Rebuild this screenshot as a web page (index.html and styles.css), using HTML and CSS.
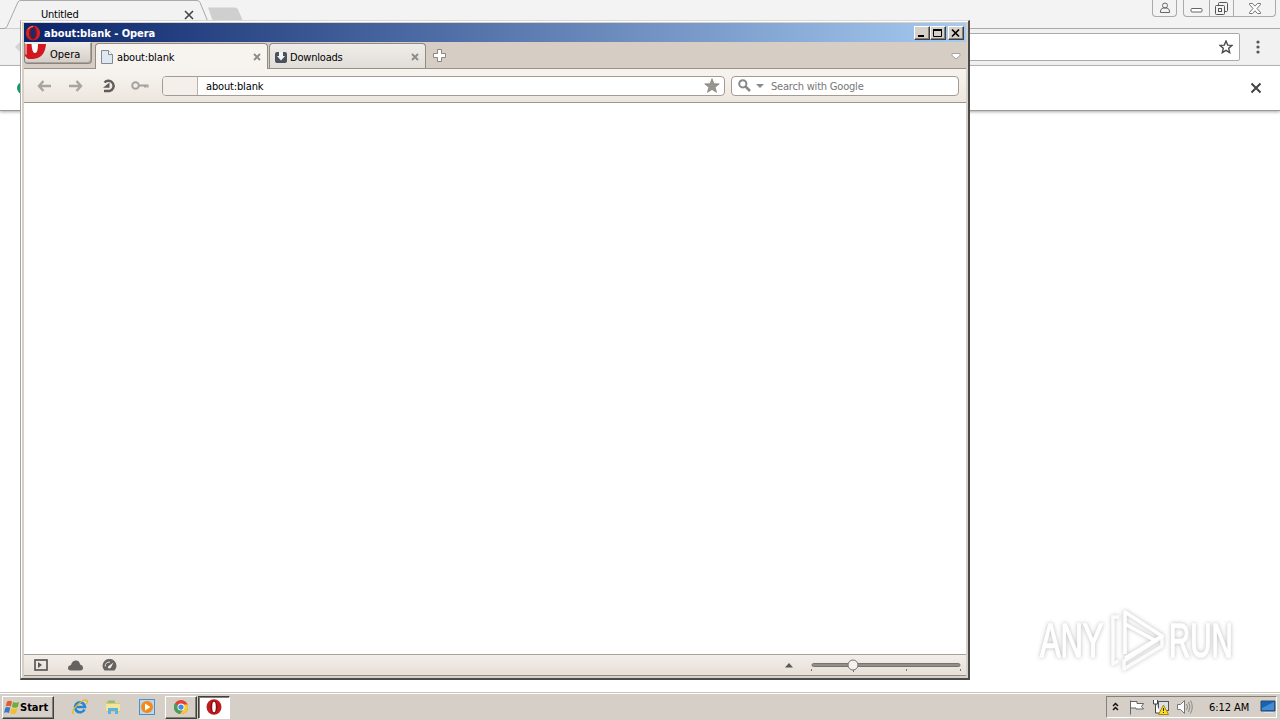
FILE: index.html
```html
<!DOCTYPE html>
<html lang="en">
<head>
<meta charset="utf-8">
<title>Desktop</title>
<link rel="stylesheet" href="styles.css">
</head>
<body>
<div class="desktop">
  <section class="chrome">
    <header class="chrome-tabs">
      <svg class="chrome-tab-shape" width="250" height="29" viewBox="0 0 250 29"><path d="M208 7.500h27q2 0 3 2l6 14h-28q-2 0-3-2z" fill="#cfcfcf"/><path d="M0 28.500h4q2 0 3-2L18 2q1-1.500 3-1.500h176q2 0 3 2l10 24q1 2 3 2" fill="#f2f2f2" stroke="#a9a9a9"/></svg>
      <span class="chrome-tab-title">Untitled</span>
      <svg class="chrome-tab-close" width="10" height="10" viewBox="0 0 10 10"><path d="M1 1l8 8M9 1L1 9" stroke="#444" stroke-width="1.600"/></svg>
      <div class="chrome-controls">
        <span class="ctl user"><svg width="12" height="12" viewBox="0 0 12 12" fill="none" stroke="#666"><circle cx="6" cy="3.500" r="2.500"/><path d="M1.500 10.500V9q0-2 2.500-3h4q2.500 1 2.500 3v1.500z"/></svg></span>
        <span class="ctl-group">
          <span class="ctl min"><svg width="13" height="14" viewBox="0 0 13 14"><rect x="1" y="8.500" width="11" height="3.500" rx="1" fill="#fff" stroke="#666"/></svg></span>
          <span class="ctl mid"><svg width="13" height="13" viewBox="0 0 13 13" fill="#f3f3f3" stroke="#555"><rect x="3.500" y=".5" width="9" height="9" rx="1"/><rect x=".5" y="3.500" width="9" height="9" rx="1"/><rect x="3.500" y="6.500" width="3" height="3"/></svg></span>
          <span class="ctl last"><svg width="12" height="11" viewBox="0 0 12 11"><path d="M.5.500h3L6 3.200 8.500.500h3v1L8 5.500l3.500 4v1h-3L6 7.800l-2.500 2.700h-3v-1L4 5.500.5 1.500z" fill="#fff" stroke="#666" stroke-width=".9"/></svg></span>
        </span>
      </div>
    </header>
    <div class="chrome-toolbar">
      <svg class="chrome-back" width="8" height="12" viewBox="0 0 8 12"><path d="M0 6l6-6v12z" fill="#d4d4d4"/></svg>
      <div class="chrome-address"><svg width="14" height="14" viewBox="0 0 14 14"><path d="M7 1l1.700 4.100 4.300.3-3.300 2.900 1 4.300L7 10.300l-3.700 2.300 1-4.300L1 5.400l4.300-.3z" fill="#fff" stroke="#4b4b4b" stroke-width="1.400"/></svg></div>
      <svg class="chrome-menu" width="4" height="14" viewBox="0 0 4 14" fill="#555"><circle cx="2" cy="2" r="1.600"/><circle cx="2" cy="7" r="1.600"/><circle cx="2" cy="12" r="1.600"/></svg>
    </div>
    <div class="chrome-infobar"><i class="green-dot"></i><svg width="12" height="12" viewBox="0 0 12 12"><path d="M1.500 1.500l9 9M10.500 1.500l-9 9" stroke="#444" stroke-width="2"/></svg></div>
    <svg class="watermark" width="220" height="76" viewBox="0 0 220 76">
      <g class="watermark-shade">
        <g class="watermark-text"><text transform="translate(9 54) scale(.63 1)">ANY</text><text transform="translate(138 54) scale(.6 1)">RUN</text></g>
        <g fill="none" stroke="#fff" stroke-width="3.500" stroke-linejoin="round"><path d="M94 51V9l37 24-37 22M94 21l31 17"/><path d="M88 14h-6v47l5-3M93 66l38-23V34L93 58z" stroke-opacity=".9"/></g>
      </g>
    </svg>
  </section>

  <section class="opera">
    <header class="titlebar">
      <svg width="16" height="16" viewBox="0 0 16 16"><ellipse cx="8" cy="8" rx="7.200" ry="7.600" fill="#cf2426"/><ellipse cx="8" cy="8" rx="4" ry="6.700" fill="#8b1018"/><ellipse cx="8" cy="8" rx="2.300" ry="5.500" fill="#1c2a70"/><path d="M3 4.500q2-3 5-3" stroke="#f0958c" fill="none"/></svg>
      <h1>about:blank - Opera</h1>
      <div class="window-buttons">
        <span class="wb"><svg width="12" height="10" viewBox="0 0 12 10"><path d="M2 8h6" stroke="#000" stroke-width="2"/></svg></span><span class="wb"><svg width="12" height="10" viewBox="0 0 12 10"><path d="M1.500 1.500h8v7h-8zM1 1.500h9" stroke="#000" fill="none"/><path d="M1 2h9" stroke="#000" stroke-width="2"/></svg></span><span class="wb close"><svg width="12" height="10" viewBox="0 0 12 10"><path d="M2 1.500l7 7M9 1.500l-7 7" stroke="#000" stroke-width="1.700"/></svg></span>
      </div>
    </header>
    <nav class="tabbar">
      <div class="opera-menu"><svg width="21" height="15" viewBox="0 0 21 15"><path d="M0 0h21Q20 14 8 15H3L0 12z" fill="#d0181e"/><path d="M6.500 0h6.500q0 9-3 9T6.500 0z" fill="#fff"/><path d="M0 0h2v11l-2-1z" fill="#ee7d7d"/></svg><span>Opera</span></div>
      <div class="tab active"><svg width="12" height="14" viewBox="0 0 12 14"><path d="M.5.500h7l4 4v9H.5z" fill="#dfe8f0" stroke="#818b95"/><path d="M7.500.500v4h4" fill="#fff" stroke="#818b95"/></svg><span>about:blank</span><svg class="tab-x" width="8" height="8" viewBox="0 0 8 8"><path d="M1 1l6 6M7 1L1 7" stroke="#8c8986" stroke-width="1.800"/></svg></div>
      <div class="tab second"><svg width="12" height="12" viewBox="0 0 12 12"><rect y="1" width="12" height="11" rx="2" fill="#4b525c"/><path d="M4 1h4v4h2L6 9.500 2 5h2z" fill="#f4f4f4"/></svg><span>Downloads</span><svg class="tab-x" width="8" height="8" viewBox="0 0 8 8"><path d="M1 1l6 6M7 1L1 7" stroke="#8c8986" stroke-width="1.800"/></svg></div>
      <svg class="new-tab" width="13" height="13" viewBox="0 0 13 13"><path d="M4.500.500h4v4h4v4h-4v4h-4v-4h-4v-4h4z" fill="#fff" stroke="#8a867f"/></svg>
      <svg class="tab-list" width="10" height="7" viewBox="0 0 10 7"><path d="M1 .5h8v2L5 6 1 2.500z" fill="#fff" stroke="#aaa39c"/></svg>
    </nav>
    <div class="toolbar">
      <svg class="nav-back" width="14" height="12" viewBox="0 0 14 12"><path d="M6.500 1L2 6l4.500 5M2 6h12" fill="none" stroke="#a8a4a0" stroke-width="2.400"/></svg>
      <svg class="nav-forward" width="14" height="12" viewBox="0 0 14 12"><path d="M7.500 1L12 6l-4.500 5M12 6H0" fill="none" stroke="#a8a4a0" stroke-width="2.400"/></svg>
      <svg class="reload" width="14" height="14" viewBox="0 0 14 14"><path d="M2.500 3.500A5.200 5.200 0 1 1 7.500 12H2" fill="none" stroke="#5f5c59" stroke-width="2.400"/><path d="M1 8.800L7.500 3.500v5.300z" fill="#5f5c59"/></svg>
      <svg class="key" width="18" height="9" viewBox="0 0 18 9"><circle cx="4.500" cy="4.500" r="3.300" fill="none" stroke="#a5a19d" stroke-width="2"/><path d="M7 4.500h10.500M14 5v1.500M16.500 5v1.500" stroke="#a5a19d" stroke-width="2"/></svg>
      <div class="address"><i></i><span>about:blank</span><svg width="16" height="15" viewBox="0 0 16 15"><path d="M8 .7l2 5 5.300.2-4.200 3.400 1.500 5L8 11.500l-4.600 2.800 1.500-5L.7 5.900 6 5.700z" fill="#98958f" stroke="#888" stroke-width=".8"/></svg></div>
      <div class="search"><svg width="13" height="13" viewBox="0 0 13 13"><circle cx="4.800" cy="4.800" r="3.600" fill="none" stroke="#888" stroke-width="2"/><path d="M7.500 7.500l4.500 4.500" stroke="#888" stroke-width="2.500"/></svg><svg class="search-caret" width="8" height="4" viewBox="0 0 8 4"><path d="M0 0h8L4 4z" fill="#888"/></svg><span>Search with Google</span></div>
    </div>
    <main class="page"></main>
    <footer class="statusbar">
      <svg width="14" height="12" viewBox="0 0 14 12"><rect x="1" y="1" width="12" height="10" fill="none" stroke="#5b5855" stroke-width="1.700"/><path d="M4 3l4 3-4 3z" fill="#5b5855"/></svg>
      <svg class="cloud" width="15" height="11" viewBox="0 0 15 11"><path d="M3 10.500Q0 10.500 0 8t3-3Q4 .5 8 .5q3.500 0 4 4 3 .5 3 3.500 0 2.500-3 2.500z" fill="#65625f"/></svg>
      <svg class="gauge" width="15" height="12" viewBox="0 0 15 12"><path d="M2.500 11.500A7 6.800 0 1 1 12.500 11.500z" fill="#65625f"/><path d="M3.200 7.500Q3 3 8 3" fill="none" stroke="#eeeae6"/><path d="M11.500 3.500L9 8.500Q7.500 10 6 9q-.5-1.500 1-2.300z" fill="#eeeae6"/></svg>
      <svg class="zoom-up" width="8" height="5" viewBox="0 0 8 5"><path d="M0 4.500L4 0l4 4.500z" fill="#5b5855"/></svg>
      <svg class="slider" width="152" height="16" viewBox="0 0 152 16"><rect x="2" y="6.500" width="148" height="3" rx="1.500" fill="#928e8a" stroke="#77736f"/><path d="M1.500 12v2M43.500 11v4M96.500 12v2M150.500 12v2" stroke="#77736f"/><circle cx="43" cy="8" r="5" fill="#f4f1ee" stroke="#77736f"/></svg>
    </footer>
  </section>

  <footer class="taskbar">
    <div class="start"><svg width="16" height="15" viewBox="0 0 16 15"><path d="M3 1.500q2.500-1.500 5 0L6.800 6.500q-2.400-1.400-5 0z" fill="#e9562b"/><path d="M9 2q3 1.500 6 0l-1.200 5q-3 1.500-6 0z" fill="#6dad38"/><path d="M1.300 7.800q2.600-1.400 5 0L5 13q-2.500-1.500-5 0z" fill="#3c78c7"/><path d="M7.500 8.300q3 1.500 6 0l-1.300 5q-3 1.500-6 0z" fill="#f6bd27"/></svg><b>Start</b></div>
    <svg class="ie" width="16" height="16" viewBox="0 0 16 16"><path d="M12.500 10.500A5 5 0 1 1 13 8H4" fill="none" stroke="#2387d3" stroke-width="2.600"/><path d="M1.500 15Q-1 12 6 5.500T15 1.500q1 1-.7 3.500" fill="none" stroke="#e5b52d" stroke-width="1.300"/></svg>
    <svg class="folder" width="16" height="16" viewBox="0 0 16 16"><path d="M1 2h6l1 2h7v9H1z" fill="#e5c565"/><path d="M3 3V1.500h7V4H3z" fill="#8cc08a"/><path d="M1 5h14v7H1z" fill="#f5e49c"/><path d="M3 15V9h10v6h-3v-3H6v3z" fill="#59b5df"/></svg>
    <svg class="media" width="16" height="16" viewBox="0 0 16 16"><rect x=".5" y=".5" width="15" height="15" fill="#b9d7f0" stroke="#4f8ec7"/><circle cx="8" cy="8" r="6" fill="#f28a18"/><path d="M6 4.500v7L11.500 8z" fill="#fff"/></svg>
    <div class="task"><svg width="14" height="14" viewBox="0 0 16 16"><circle cx="8" cy="8" r="8" fill="#e34133"/><path d="M1 4a8 8 0 0 0 6 12l4-6-3-2z" fill="#42a05a"/><path d="M8 5h7.400A8 8 0 0 1 7 16l4-6z" fill="#f8cb2e"/><circle cx="8" cy="8" r="4" fill="#fff"/><circle cx="8" cy="8" r="3" fill="#4388e8"/></svg></div>
    <div class="task current"><svg width="16" height="16" viewBox="0 0 16 16"><ellipse cx="8" cy="8" rx="7.500" ry="7.700" fill="#c01c1e"/><ellipse cx="8" cy="8" rx="3.500" ry="6.500" fill="#8c0b10"/><ellipse cx="8" cy="8" rx="1.800" ry="5.300" fill="#fff"/></svg></div>
    <div class="tray">
      <svg class="expand" width="7" height="9" viewBox="0 0 7 9"><path d="M1 4l2.500-2.500L6 4M1 8l2.500-2.500L6 8" fill="none" stroke="#111" stroke-width="1.500"/></svg>
      <svg class="flag" width="16" height="16" viewBox="0 0 16 16"><path d="M1.500 1.500v14M2 2.500h6v2h6.500l-2 3 2 2.500H7V9H2" fill="#fff" stroke="#666"/></svg>
      <svg class="network" width="16" height="16" viewBox="0 0 16 16"><rect x="5.500" y="2.500" width="10" height="9" fill="#dce1e5" stroke="#555"/><path d="M.5 1v4h4V1M2.500 5v9h6" fill="#fff" stroke="#444"/><path d="M10.500 6l5 9.500h-10z" fill="#ffdc20" stroke="#a28912"/><path d="M10.500 9v3M10.500 13v1" stroke="#222"/></svg>
      <svg class="speaker" width="17" height="16" viewBox="0 0 17 16"><path d="M1.500 5.500h3l4-4v13l-4-4h-3z" fill="#fff" stroke="#777"/><path d="M10.500 5q2 3 0 6M12.500 3q3 5 0 10M14.500 1.500q3.500 6.500 0 13" fill="none" stroke="#888"/></svg>
      <time>6:12 AM</time>
      <svg class="monitor" width="16" height="14" viewBox="0 0 16 14"><path d="M1 1h14v10H1z" fill="#1662b5" stroke="#304a6a"/><path d="M2 8l12-6v8H2z" fill="#438dd4"/><path d="M4 12.500h9" stroke="#d6e4ef"/></svg>
    </div>
  </footer>
</div>
</body>
</html>
```
FILE: styles.css
```css
* { box-sizing: border-box; }
body { margin: 0; font: 11px "DejaVu Sans Condensed", "DejaVu Sans", sans-serif; font-stretch: condensed; color: #000; }
svg { display: block; flex: none; }
.desktop { position: relative; display: flex; flex-direction: column; width: 1280px; height: 720px; overflow: hidden; background: #fff; }

.chrome { position: relative; flex: 1; }
.chrome-tabs { position: relative; display: flex; align-items: flex-start; height: 29px; background: #f3f3f3; border-bottom: 1px solid #aaa; }
.chrome-tab-shape { position: absolute; left: 0; top: 0; }
.chrome-tab-title { position: relative; width: 143px; margin: 8px 0 0 41px; line-height: 13px; letter-spacing: -.2px; }
.chrome-tab-close { position: relative; margin-top: 10px; }
.chrome-controls { display: flex; gap: 6px; margin-left: auto; padding-right: 4px; }
.ctl, .ctl-group { display: flex; justify-content: center; height: 17px; }
.ctl.user, .ctl-group { border: 1px solid #aaa; border-top: 0; border-radius: 0 0 4px 4px; }
.user { width: 25px; padding-top: 2px; }
.ctl.min { width: 25px; }
.ctl.mid { width: 25px; height: 16px; padding-top: 2px; border: solid #aaa; border-width: 0 1px; }
.ctl.last { width: 41px; padding-top: 3px; }
.chrome-toolbar { display: flex; align-items: center; height: 37px; background: #f1f1f1; border-bottom: 1px solid #b4b4b4; }
.chrome-back { margin-left: 15px; }
.chrome-address { display: flex; align-items: center; justify-content: flex-end; width: 1205px; height: 28px; margin-left: 12px; padding-right: 6px; background: #fff; border: 1px solid #aaa; border-radius: 2px; }
.chrome-menu { margin-left: 16px; }
.chrome-infobar { display: flex; align-items: center; justify-content: space-between; height: 45px; padding: 0 18px 0 17px; border-bottom: 1px solid #999; box-shadow: 0 1px 3px #aaa; }
.green-dot { width: 12px; height: 12px; border-radius: 50%; background: #129b65; }
.watermark { position: absolute; left: 1031px; top: 603px; }
.watermark-shade { filter: drop-shadow(0 0 2px #bbb); }
.watermark-text { font: 49px "Liberation Sans", sans-serif; fill: #fff; stroke: #fff; stroke-width: 1.5px; }

.opera { position: absolute; left: 20px; top: 20px; display: flex; flex-direction: column; width: 950px; height: 660px; padding: 2px; background: #d6d0c8; border: 2px solid; border-color: #ddd8d1 #4a4a4a #4a4a4a #aaa69f; border-width: 1px 2px 2px 1px; box-shadow: inset 1px 1px #fff; }
.titlebar { display: flex; align-items: center; height: 19px; margin-left: 1px; padding: 1px 2px 0 1px; background: linear-gradient(90deg, #0a246a, #a6caf0); }
.titlebar h1 { margin: 0 0 0 3px; color: #fff; font-size: 11px; line-height: 17px; letter-spacing: -.03px; }
.window-buttons { display: flex; margin-left: auto; }
.wb { width: 16px; height: 14px; padding: 1px; background: #d6d0c8; border: 1px solid; border-color: #fff #404040 #404040 #fff; box-shadow: inset -1px -1px #808080; }
.wb.close { margin-left: 2px; }
.tabbar { display: flex; height: 27px; margin-left: 1px; background: #d6cec5; border-bottom: 1px solid #989187; }
.opera-menu { display: flex; width: 68px; height: 22px; margin-right: 3px; border: 1px solid #89847e; border-top-color: #eee; border-radius: 0 0 4px 4px; background: linear-gradient(#eeebe6, #d4cdc6); box-shadow: inset -1px -1px #aaa49d; }
.opera-menu svg { margin-top: 1px; }
.opera-menu span { margin-left: 4px; line-height: 23px; }
.tab { display: flex; align-items: center; height: 26px; margin-top: 1px; border: 1px solid #918b84; border-radius: 4px 4px 0 0; }
.tab span { padding-top: 2px; line-height: 23px; letter-spacing: -.15px; }
.active { width: 173px; padding: 0 6px 0 5px; background: #f7f4ef; border-bottom: 0; }
.active span { margin-left: 4px; }
.second { width: 157px; height: 25px; margin-left: 1px; padding: 1px 6px 0 5px; background: linear-gradient(#efede9, #e1ded9); border-bottom: 0; }
.second span { margin-left: 3px; letter-spacing: -.2px; }
.tab-x { margin-left: auto; }
.new-tab { margin: 7px 0 0 7px; }
.tab-list { margin: 11px 5px 0 auto; }
.toolbar { display: flex; align-items: center; height: 34px; margin-left: 1px; padding: 0 7px 0 13px; background: linear-gradient(#f7f4ef, #ede6df); border-bottom: 1px solid #9d9690; }
.nav-forward { margin-left: 18px; }
.reload { margin-left: 19px; }
.key { margin-left: 15px; }
.address, .search { display: flex; align-items: center; height: 20px; background: #fff; border: 1px solid #a39b94; border-radius: 4px; overflow: hidden; }
.address { width: 563px; margin-left: 13px; padding-right: 4px; }
.address i { width: 35px; height: 18px; margin-right: 8px; border-right: 1px solid #bbb2ab; background: #f4efea; }
.address span { padding-top: 1px; letter-spacing: -.15px; }
.address svg { margin-left: auto; }
.search { width: 228px; margin-left: 6px; padding-left: 6px; color: #777; }
.search span { margin-left: 7px; padding-top: 1px; letter-spacing: -.2px; }
.search-caret { margin-left: 5px; }
.page { flex: 1; margin-left: 1px; background: #fff; }
.statusbar { display: flex; align-items: center; height: 22px; margin-left: 1px; padding: 0 4px 0 10px; background: linear-gradient(#f3eeea, #e7dfd8); border-top: 1px solid #a8a29c; border-bottom: 1px solid #8e8983; }
.cloud { margin-left: 20px; }
.gauge { margin-left: 19px; }
.zoom-up { margin-left: auto; }
.slider { margin-left: 17px; }

.taskbar { position: relative; display: flex; align-items: center; height: 28px; padding: 1px 3px 0 2px; background: #d6cfc7; border-top: 1px solid #cbc6bd; box-shadow: inset 0 1px #fff; }
.start, .task { display: flex; align-items: center; height: 23px; background: #d6cfc7; border: 1px solid; border-color: #fff #404040 #404040 #fff; box-shadow: inset -1px -1px #868078; }
.start { width: 52px; padding-left: 1px; }
.start b { letter-spacing: 0; }
.ie { margin-left: 18px; }
.folder { margin-left: 17px; }
.media { margin-left: 18px; }
.task { justify-content: center; width: 32px; margin-left: 10px; }
.task.current { margin-left: 1px; background: #fff; border-color: #404040 #fff #fff #404040; box-shadow: inset 1px 1px #868078; }
.tray { display: flex; align-items: center; width: 171px; height: 22px; margin-left: auto; padding-left: 5px; border: 1px solid; border-color: #858078 #fff #fff #858078; }
.expand { margin-bottom: 2px; }
.flag { margin-left: 10px; }
.network { margin-left: 8px; }
.speaker { margin-left: 7px; }
.tray time { margin-left: 16px; width: 41px; white-space: nowrap; letter-spacing: -.05px; }
.monitor { margin-left: 10px; }
```
